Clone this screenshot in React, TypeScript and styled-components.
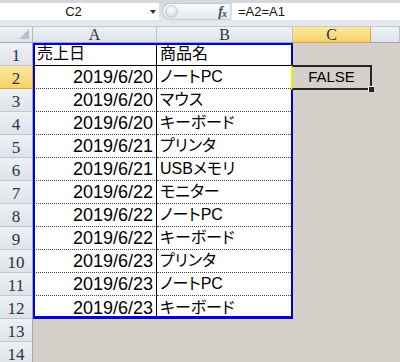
import { Fragment } from "react";
import styled, { createGlobalStyle } from "styled-components";

const GlobalStyle = createGlobalStyle`
  html, body {
    margin: 0;
    padding: 0;
    background: #d5d1ca;
    overflow: hidden;
  }
`;

const Window = styled.div`
  width: 400px;
  height: 362px;
  overflow: hidden;
  background: #d5d1ca;
`;

const FormulaBar = styled.div`
  display: flex;
  height: 27px;
  box-sizing: border-box;
  padding: 3px 0 6px;
  background: linear-gradient(#d3d8de, #e6e9ed);
  border-bottom: 1px solid #c2c8cf;
  font-family: "Liberation Sans", Arial, sans-serif;
  font-size: 13px;
  color: #111;
`;

const NameBox = styled.div`
  width: 147px;
  background: #fff;
  display: flex;
  align-items: center;
  justify-content: center;
`;

const DropBox = styled.div`
  width: 12px;
  background: #fff;
  display: flex;
  align-items: center;
  justify-content: center;
`;

const Arrow = styled.div`
  width: 0;
  height: 0;
  border-left: 3.5px solid transparent;
  border-right: 3.5px solid transparent;
  border-top: 4px solid #333;
`;

const Pill = styled.div`
  width: 68px;
  margin-left: 3px;
  border-radius: 9px 0 0 9px;
  border: 1px solid #c4cad2;
  border-right: none;
  box-sizing: border-box;
  background: linear-gradient(#fbfcfd, #e4e8ed);
  display: flex;
  align-items: center;
  justify-content: space-between;
  padding: 0 4px 0 2px;
`;

const Grip = styled.div`
  width: 11px;
  height: 11px;
  border-radius: 50%;
  background: radial-gradient(circle at 45% 35%, #ffffff, #d7dce2 70%, #b6bdc6);
  border: 1px solid #c3c9d0;
`;

const Fx = styled.span`
  font-family: "Liberation Serif", "Times New Roman", serif;
  font-style: italic;
  font-weight: bold;
  font-size: 14px;
  color: #4a4a4a;
  letter-spacing: -1px;

  sub {
    font-size: 10px;
    vertical-align: -1px;
  }
`;

const FormulaInput = styled.div`
  flex: 1;
  margin-left: 2px;
  background: #fff;
  display: flex;
  align-items: center;
  padding-left: 6px;
`;

const Sheet = styled.div`
  display: grid;
  grid-template-columns: 33px 124px 136px 78px 1fr;
  grid-template-rows: 16px repeat(14, 23px);
`;

const HeaderBase = styled.div<{ $active?: boolean }>`
  box-sizing: border-box;
  display: flex;
  align-items: center;
  justify-content: center;
  font-family: "Liberation Serif", "Times New Roman", serif;
  color: #22344c;
  background: ${(p) =>
    p.$active
      ? "linear-gradient(#fde7a0, #f8d26a)"
      : "linear-gradient(#eef1f4, #dfe3e8)"};
`;

const Corner = styled(HeaderBase)`
  position: relative;
  border-right: 1px solid #b3bcc6;
  border-bottom: 1px solid #9ea9b5;

  &::after {
    content: "";
    position: absolute;
    right: 3px;
    bottom: 3px;
    border-left: 10px solid transparent;
    border-bottom: 10px solid #b9c1ca;
  }
`;

const ColHeader = styled(HeaderBase)`
  font-size: 16px;
  line-height: 16px;
  padding-top: 1px;
  border-right: 1px solid ${(p) => (p.$active ? "#e3a23e" : "#b9c3ce")};
  border-bottom: 1px solid ${(p) => (p.$active ? "#e3a23e" : "#9ea9b5")};
`;

const RowHeader = styled(HeaderBase)`
  font-size: 17px;
  padding-top: 3px;
  border-right: 1px solid ${(p) => (p.$active ? "#e3a23e" : "#9ea9b5")};
  border-bottom: 1px solid ${(p) => (p.$active ? "#e3a23e" : "#c0c8d1")};
`;

const Table = styled.div`
  grid-column: 2 / 4;
  grid-row: 2 / 14;
  position: relative;
  display: grid;
  grid-template-columns: 124px 136px;
  grid-auto-rows: 23px;
  background: #fff;

  &::after {
    content: "";
    position: absolute;
    inset: 0;
    border: 2px solid #0000d8;
    border-bottom-width: 3px;
    pointer-events: none;
  }
`;

type Line = "solid" | "dotted" | "none";

const Cell = styled.div<{ $line: Line; $first?: boolean; $alignRight?: boolean }>`
  box-sizing: border-box;
  display: flex;
  align-items: flex-end;
  justify-content: ${(p) => (p.$alignRight ? "flex-end" : "flex-start")};
  padding: 0 3px 1px ${(p) => (p.$first ? "4px" : "3px")};
  border-bottom: ${(p) =>
    p.$line === "none" ? "none" : `1px ${p.$line} ${p.$line === "solid" ? "#000" : "#444"}`};
  border-right: ${(p) => (p.$first ? "1px solid #000" : "none")};
  font-family: "Liberation Sans", Arial, "Noto Sans CJK JP", sans-serif;
  font-feature-settings: "palt";
  color: #000;
  white-space: nowrap;
  overflow: hidden;
`;

const DateText = styled.span`
  font-size: 18px;
  line-height: 20px;
`;

const LabelText = styled.span`
  font-size: 16px;
  line-height: 20px;
`;

const Selection = styled.div`
  grid-column: 4;
  grid-row: 3;
  margin: -1px -1px -1px -2px;
  position: relative;
  z-index: 1;
  border: 2px solid #262626;
  border-left-color: #f4ee00;
  display: flex;
  align-items: flex-end;
  justify-content: center;
  padding-bottom: 1px;
  font-family: "Liberation Sans", Arial, sans-serif;
  font-size: 15px;
  line-height: 20px;
  color: #000;

  &::after {
    content: "";
    position: absolute;
    right: -4px;
    bottom: -4px;
    width: 5px;
    height: 5px;
    background: #262626;
    border: 1px solid #fff;
    border-width: 1px 0 0 1px;
  }
`;

const rows: [string, string][] = [
  ["2019/6/20", "ノートPC"],
  ["2019/6/20", "マウス"],
  ["2019/6/20", "キーボード"],
  ["2019/6/21", "プリンタ"],
  ["2019/6/21", "USBメモリ"],
  ["2019/6/22", "モニター"],
  ["2019/6/22", "ノートPC"],
  ["2019/6/22", "キーボード"],
  ["2019/6/23", "プリンタ"],
  ["2019/6/23", "ノートPC"],
  ["2019/6/23", "キーボード"],
];

const lineFor = (i: number): Line => (i === 0 ? "solid" : i === 11 ? "none" : "dotted");

export default function App() {
  return (
    <Window>
      <GlobalStyle />
      <FormulaBar>
        <NameBox>C2</NameBox>
        <DropBox>
          <Arrow />
        </DropBox>
        <Pill>
          <Grip />
          <Fx>
            f<sub>x</sub>
          </Fx>
        </Pill>
        <FormulaInput>=A2=A1</FormulaInput>
      </FormulaBar>
      <Sheet>
        <Corner />
        <ColHeader>A</ColHeader>
        <ColHeader>B</ColHeader>
        <ColHeader $active>C</ColHeader>
        <ColHeader />
        {Array.from({ length: 14 }, (_, i) => (
          <RowHeader key={i} $active={i === 1} style={{ gridRow: i + 2 }}>
            {i + 1}
          </RowHeader>
        ))}
        <Table>
          {/* header row */}
          <Cell $line={lineFor(0)} $first>
            <LabelText>売上日</LabelText>
          </Cell>
          <Cell $line={lineFor(0)}>
            <LabelText>商品名</LabelText>
          </Cell>
          {rows.map(([date, name], i) => (
            <Fragment key={i}>
              <Cell $line={lineFor(i + 1)} $first $alignRight>
                <DateText>{date}</DateText>
              </Cell>
              <Cell $line={lineFor(i + 1)}>
                <LabelText>{name}</LabelText>
              </Cell>
            </Fragment>
          ))}
        </Table>
        <Selection>FALSE</Selection>
      </Sheet>
    </Window>
  );
}
